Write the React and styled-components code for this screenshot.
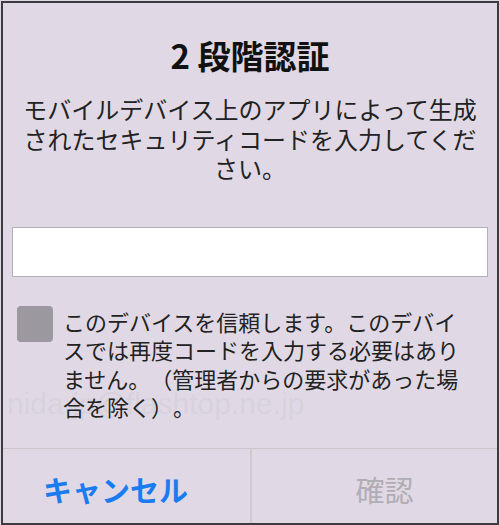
import React from "react";
import styled, { createGlobalStyle } from "styled-components";

const GlobalStyle = createGlobalStyle`
  html, body {
    margin: 0;
    padding: 0;
    background: #e0d9e5;
  }
  body {
    font-family: "Noto Sans CJK JP", "Noto Sans", sans-serif;
    text-spacing-trim: space-all;
  }
`;

const Page = styled.div`
  width: 500px;
  height: 525px;
  padding: 1px 1px 0 1px;
  box-sizing: border-box;
`;

const Frame = styled.div`
  position: relative;
  width: 498px;
  height: 524px;
  box-sizing: border-box;
  border: 2px solid #3d3b3f;
  background: #e0d9e5;
  display: flex;
  flex-direction: column;
  overflow: hidden;
`;

const Ghost = styled.div`
  position: absolute;
  left: ${({ left }) => left}px;
  top: ${({ top }) => top}px;
  font-family: "Liberation Sans", Arial, sans-serif;
  font-size: ${({ size }) => size}px;
  color: #d8d2dd;
  white-space: nowrap;
  pointer-events: none;
`;

const Body = styled.div`
  position: relative;
  flex: 1;
  padding: 32px 9px 0 9px;
  display: flex;
  flex-direction: column;
`;

const Title = styled.h1`
  margin: 0;
  font-size: 33px;
  line-height: 40px;
  font-weight: 700;
  color: #111;
  text-align: center;
`;

const Message = styled.p`
  margin: 19px auto 0;
  width: 466px;
  font-size: 24px;
  line-height: 29.5px;
  color: #222;
  text-align: center;
  text-spacing-trim: space-all;
`;

const CodeInput = styled.input`
  margin-top: 44px;
  height: 50px;
  box-sizing: border-box;
  border: 1px solid #b4b0b7;
  background: #fff;
  outline: none;
  font-size: 22px;
  padding: 0 10px;
`;

const TrustRow = styled.label`
  margin-top: 30px;
  display: flex;
  align-items: flex-start;
  gap: 10px;
  padding-left: 5px;
`;

const Box = styled.span`
  flex: none;
  width: 36px;
  height: 36px;
  border-radius: 4px;
  background: #9b98a0;
  margin-top: -1px;
`;

const TrustText = styled.span`
  width: 410px;
  font-size: 22px;
  line-height: 28.5px;
  color: #222;
  text-spacing-trim: space-all;
`;

const Footer = styled.div`
  position: relative;
  height: 74px;
  border-top: 1px solid #cbc6cc;
  display: flex;
`;

const Action = styled.button`
  flex: 1;
  border: none;
  background: transparent;
  font-family: inherit;
  font-size: 29px;
  font-weight: ${({ primary }) => (primary ? 700 : 400)};
  color: ${({ primary }) => (primary ? "#1a7cf0" : "#b0adb3")};
  padding: 6px ${({ shiftRight }) => (shiftRight ? 0 : 22)}px 0 ${({ shiftRight }) => (shiftRight ? 20 : 0)}px;
  & + & {
    border-left: 2px solid #d0cbd1;
  }
`;

export default function App() {
  return (
    <>
      <GlobalStyle />
      <Page>
        <Frame>
          <Ghost left={4} top={384} size={30}>
            nida.jp@flashtop.ne.jp
          </Ghost>
          <Body>
            <Title>2 段階認証</Title>
            <Message>
              モバイルデバイス上のアプリによって生成されたセキュリティコードを入力してください。
            </Message>
            <CodeInput type="text" />
            <TrustRow>
              <Box />
              <TrustText>
                このデバイスを信頼します。このデバイスでは再度コードを入力する必要はありません。（管理者からの要求があった場合を除く）。
              </TrustText>
            </TrustRow>
          </Body>
          <Footer>
            <Action primary>キャンセル</Action>
            <Action shiftRight>確認</Action>
          </Footer>
        </Frame>
      </Page>
    </>
  );
}
